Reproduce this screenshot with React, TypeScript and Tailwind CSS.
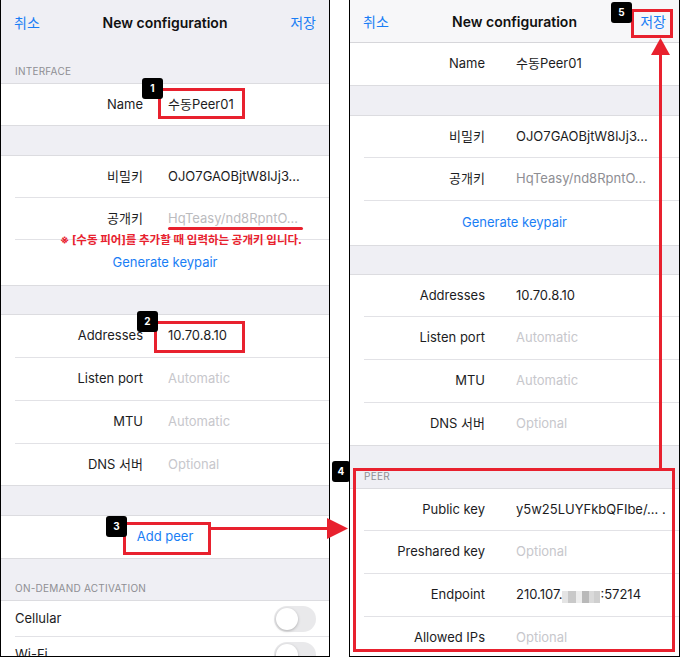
import React from "react";

const RED = "#e8212e";

type RowProps = {
    label: string;
    value?: React.ReactNode;
    tone?: "dark" | "muted" | "hint";
    labelW: string;
    gap: string;
    h?: string;
};

const Row = ({ label, value, tone = "dark", labelW, gap, h = "h-[42px]" }: RowProps) => {
    const toneClass =
        tone === "dark" ? "text-[#1c1c1e]" : tone === "muted" ? "text-[#8e8e93]" : "text-[#c7c7cc]";
    return (
        <div className={`flex items-center bg-white ${h}`}>
            <div className={`${labelW} shrink-0 text-right text-[13px] text-[#1c1c1e]`}>{label}</div>
            <div className={`${gap} truncate text-[13px] ${toneClass}`}>{value}</div>
        </div>
    );
};

const Sep = () => <div className="ml-[14px] h-px bg-[#e2e2e6]" />;

const Section = ({ children }: { children: React.ReactNode }) => (
    <div className="border-y border-[#dcdce0] bg-white">{children}</div>
);

const Header = ({ text, h }: { text?: string; h: string }) => (
    <div className={`${h} flex items-end pb-[7px] pl-[14px] text-[10px] leading-[10px] tracking-wide text-[#8e8e93]`}>
        {text}
    </div>
);

const Toggle = () => (
    <div className="flex h-[26px] w-[42px] items-center rounded-full bg-[#e9e9eb] px-[2px]">
        <div className="h-[22px] w-[22px] rounded-full bg-white shadow-[0_1px_3px_rgba(0,0,0,0.25)]" />
    </div>
);

const NavBar = ({ className }: { className: string }) => (
    <div className={`grid grid-cols-[1fr_auto_1fr] items-center px-[13px] ${className}`}>
        <span className="text-[14px] text-[#1a7ef5]">취소</span>
        <span className="text-[14px] font-semibold text-[#111]">New configuration</span>
        <span className="justify-self-end text-[14px] text-[#1a7ef5]">저장</span>
    </div>
);

const Blurred = () => (
    <span className="inline-flex h-[12px] w-[38px] translate-y-[1px] align-middle">
        <span className="h-full w-[6px] bg-[#e4e4e4]" />
        <span className="h-full w-[8px] bg-[#c9c9c9]" />
        <span className="h-full w-[6px] bg-[#ededed]" />
        <span className="h-full w-[7px] bg-[#b9b9b9]" />
        <span className="h-full w-[5px] bg-[#dadada]" />
        <span className="h-full w-[6px] bg-[#cfcfcf]" />
    </span>
);

const LeftPanel = () => {
    const lw = "w-[142px]";
    const g = "ml-[25px]";
    return (
        <div className="h-[657px] w-[330px] shrink-0 overflow-hidden border-x border-b border-black bg-[#efeff4]">
            <NavBar className="h-[45px]" />
            <Header text="INTERFACE" h="h-[38px]" />
            <Section>
                <Row label="Name" value="수동Peer01" labelW={lw} gap={g} h="h-[41px]" />
            </Section>
            <div className="h-[29px]" />
            <Section>
                <Row label="비밀키" value="OJO7GAOBjtW8lJj3..." labelW={lw} gap={g} h="h-[41px]" />
                <Sep />
                <Row label="공개키" value="HqTeasy/nd8RpntO..." tone="muted" labelW={lw} gap={g} h="h-[41px]" />
                <Sep />
                <div className="flex h-[45px] items-center justify-center text-[13px] text-[#1a7ef5]">
                    Generate keypair
                </div>
            </Section>
            <div className="h-[28px]" />
            <Section>
                <Row label="Addresses" value="10.70.8.10" labelW={lw} gap={g} />
                <Sep />
                <Row label="Listen port" value="Automatic" tone="hint" labelW={lw} gap={g} />
                <Sep />
                <Row label="MTU" value="Automatic" tone="hint" labelW={lw} gap={g} />
                <Sep />
                <Row label="DNS 서버" value="Optional" tone="hint" labelW={lw} gap={g} h="h-[41px]" />
            </Section>
            <div className="h-[29px]" />
            <Section>
                <div className="flex h-[42px] items-center justify-center text-[13px] text-[#1a7ef5]">
                    Add peer
                </div>
            </Section>
            <Header text="ON-DEMAND ACTIVATION" h="h-[41px]" />
            <Section>
                <div className="flex h-[35px] items-center justify-between pl-[14px] pr-[13px]">
                    <span className="text-[13px] text-[#1c1c1e]">Cellular</span>
                    <Toggle />
                </div>
                <Sep />
                <div className="flex h-[35px] items-center justify-between pl-[14px] pr-[13px]">
                    <span className="text-[13px] text-[#1c1c1e]">Wi-Fi</span>
                    <Toggle />
                </div>
            </Section>
        </div>
    );
};

const RightPanel = () => {
    const lw = "w-[135px]";
    const g = "ml-[31px]";
    return (
        <div className="h-[657px] w-[331px] shrink-0 overflow-hidden border-x border-b border-black bg-[#efeff4]">
            <NavBar className="h-[43px] border-b border-[#d6d6da] bg-[#f7f7f9]" />
            <div className="border-b border-[#dcdce0] bg-white">
                <Row label="Name" value="수동Peer01" labelW={lw} gap={g} />
            </div>
            <div className="h-[29px]" />
            <Section>
                <Row label="비밀키" value="OJO7GAOBjtW8lJj3..." labelW={lw} gap={g} h="h-[41px]" />
                <Sep />
                <Row label="공개키" value="HqTeasy/nd8RpntO..." tone="muted" labelW={lw} gap={g} />
                <Sep />
                <div className="flex h-[44px] items-center justify-center text-[13px] text-[#1a7ef5]">
                    Generate keypair
                </div>
            </Section>
            <div className="h-[28px]" />
            <Section>
                <Row label="Addresses" value="10.70.8.10" labelW={lw} gap={g} h="h-[41px]" />
                <Sep />
                <Row label="Listen port" value="Automatic" tone="hint" labelW={lw} gap={g} />
                <Sep />
                <Row label="MTU" value="Automatic" tone="hint" labelW={lw} gap={g} />
                <Sep />
                <Row label="DNS 서버" value="Optional" tone="hint" labelW={lw} gap={g} />
            </Section>
            <Header text="PEER" h="h-[42px]" />
            <Section>
                <Row label="Public key" value="y5w25LUYFkbQFIbe/... ." labelW={lw} gap={g} h="h-[41px]" />
                <Sep />
                <Row label="Preshared key" value="Optional" tone="hint" labelW={lw} gap={g} />
                <Sep />
                <Row
                    label="Endpoint"
                    value={
                        <>
                            210.107.
                            <Blurred />
                            :57214
                        </>
                    }
                    labelW={lw}
                    gap={g}
                />
                <Sep />
                <Row label="Allowed IPs" value="Optional" tone="hint" labelW={lw} gap={g} />
            </Section>
        </div>
    );
};

const Badge = ({ n, className }: { n: number; className: string }) => (
    <div
        className={`absolute flex h-[21px] items-center justify-center rounded-[3px] bg-black text-[10px] font-bold text-white ${className}`}
    >
        {n}
    </div>
);

const Box = ({ className }: { className: string }) => (
    <div className={`absolute border-[3px] border-[#e8212e] ${className}`} />
);

export default function App() {
    return (
        <div className="relative h-[657px] w-[680px] overflow-hidden bg-white font-[Inter,'Noto_Sans_CJK_KR',sans-serif]">
            <div className="flex gap-[19px]">
                <LeftPanel />
                <RightPanel />
            </div>

            {/* annotations */}
            <div className="absolute left-[165px] top-[205px] h-[24px] w-[142px] bg-white/40" />
            <div className="absolute left-[168px] top-[227px] h-[3px] w-[135px] rounded-full bg-[#e8212e]" />
            <div className="absolute left-[60px] top-[232px] whitespace-nowrap text-[11.5px] font-bold text-[#e8212e]">
                ※ [수동 피어]를 추가할 때 입력하는 공개키 입니다.
            </div>

            <Box className="left-[158px] top-[88px] h-[31px] w-[87px]" />
            <Box className="left-[154px] top-[321px] h-[32px] w-[91px]" />
            <Box className="left-[123px] top-[522px] h-[33px] w-[88px]" />
            <Box className="left-[631px] top-[9px] h-[29px] w-[42px]" />
            <Box className="left-[353px] top-[468px] h-[184px] w-[322px]" />

            <svg className="pointer-events-none absolute left-0 top-0" width="680" height="657">
                <rect x="211" y="527" width="117" height="3" fill={RED} />
                <polygon points="327,518 348,528.5 327,539" fill={RED} />
                <rect x="659" y="54" width="3" height="414" fill={RED} />
                <polygon points="651,55 660.5,38 670,55" fill={RED} />
            </svg>

            <Badge n={1} className="left-[142px] top-[78px] w-[21px]" />
            <Badge n={2} className="left-[137px] top-[311px] w-[21px]" />
            <Badge n={3} className="left-[106px] top-[516px] w-[21px]" />
            <Badge n={4} className="left-[332px] top-[461px] w-[18px]" />
            <Badge n={5} className="left-[611px] top-[2px] w-[21px]" />
        </div>
    );
}
